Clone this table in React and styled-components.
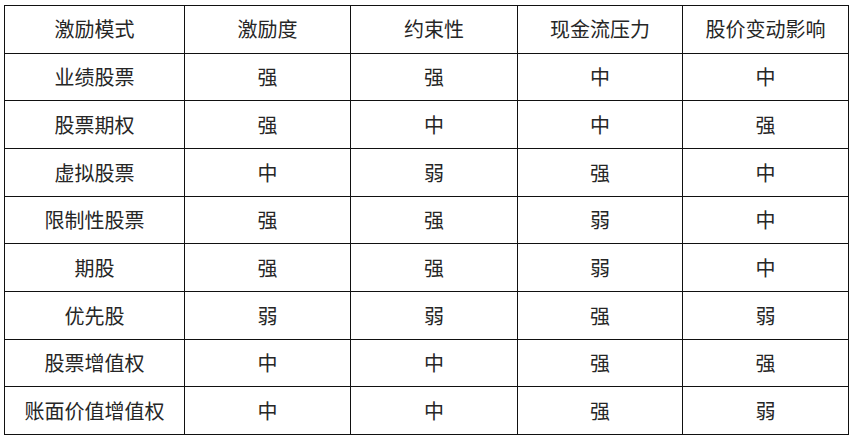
import React from "react";
import styled, { createGlobalStyle } from "styled-components";

const GlobalStyle = createGlobalStyle`
  html, body {
    margin: 0;
    padding: 0;
    background: #ffffff;
  }
`;

const Page = styled.div`
  width: 851px;
  height: 441px;
  padding: 5px 0 0 4px;
  box-sizing: border-box;
  background: #fff;
`;

const Grid = styled.div`
  display: grid;
  grid-template-columns: 179px 165px 166px 164px 165px;
  grid-template-rows: repeat(9, 1fr);
  gap: 1px;
  padding: 1px;
  width: 845px;
  height: 430px;
  box-sizing: border-box;
  background: #111;
`;

const Cell = styled.div`
  background: #fff;
  display: flex;
  align-items: center;
  justify-content: center;
  font-family: "Noto Sans CJK SC", "Noto Sans", sans-serif;
  font-size: 20px;
  font-weight: 400;
  color: #262626;
  padding-bottom: ${(p) => (p.$head ? "2px" : "0")};
`;

const header = ["激励模式", "激励度", "约束性", "现金流压力", "股价变动影响"];
const rows = [
  ["业绩股票", "强", "强", "中", "中"],
  ["股票期权", "强", "中", "中", "强"],
  ["虚拟股票", "中", "弱", "强", "中"],
  ["限制性股票", "强", "强", "弱", "中"],
  ["期股", "强", "强", "弱", "中"],
  ["优先股", "弱", "弱", "强", "弱"],
  ["股票增值权", "中", "中", "强", "强"],
  ["账面价值增值权", "中", "中", "强", "弱"],
];

export default function App() {
  return (
    <>
      <GlobalStyle />
      <Page>
        <Grid>
          {header.map((h) => (
            <Cell key={h} $head>
              {h}
            </Cell>
          ))}
          {rows.map((r, i) =>
            r.map((c, j) => <Cell key={`${i}-${j}`}>{c}</Cell>)
          )}
        </Grid>
      </Page>
    </>
  );
}
